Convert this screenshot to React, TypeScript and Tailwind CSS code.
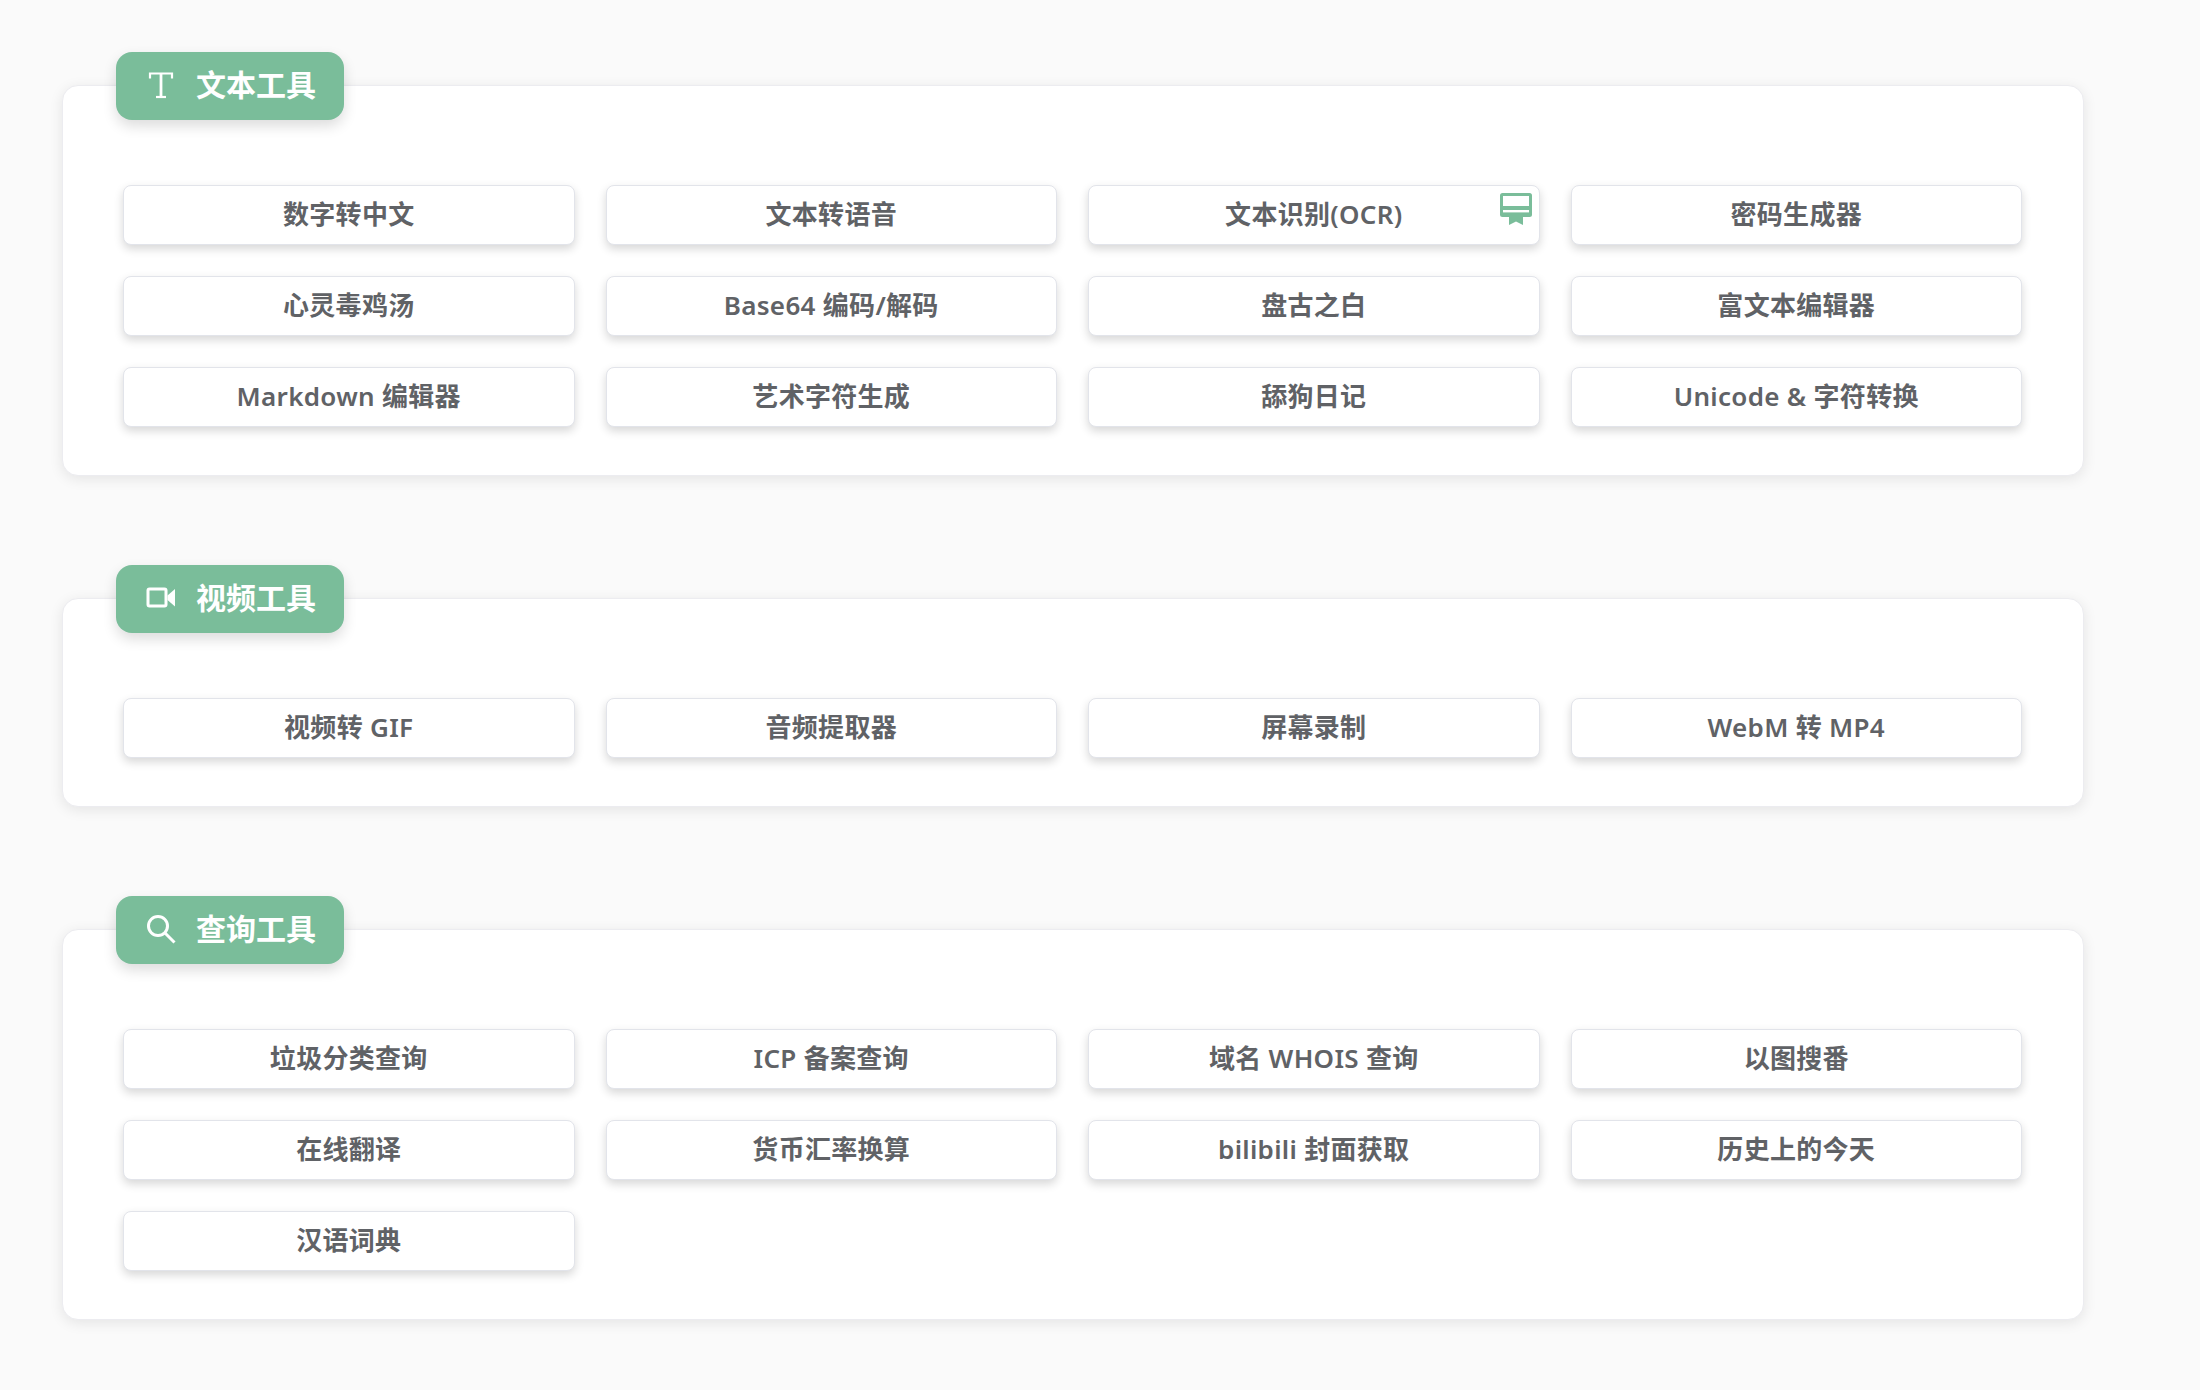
import React from "react";

const FONT = "font-['Noto_Sans','Noto_Sans_CJK_SC',sans-serif]";

function TextIcon() {
  return (
    <svg width="30" height="30" viewBox="0 0 30 30" fill="none" stroke="white" strokeWidth="2.2">
      <path d="M4 8.5V3.5H26V8.5" />
      <path d="M15 3.5V27" strokeWidth="2.8" />
      <path d="M10 27H20" />
    </svg>
  );
}

function VideoIcon() {
  return (
    <svg width="30" height="30" viewBox="0 0 30 30" fill="none">
      <rect x="2" y="6" width="18" height="17" rx="1.5" stroke="white" strokeWidth="3" />
      <path d="M21.5 12.5L29 6V23.5L21.5 17Z" fill="white" />
    </svg>
  );
}

function SearchIcon() {
  return (
    <svg width="30" height="30" viewBox="0 0 30 30" fill="none" stroke="white" strokeWidth="3">
      <circle cx="12" cy="12" r="9.5" />
      <path d="M19 19L28.5 28.5" />
    </svg>
  );
}

function Badge() {
  return (
    <svg className="absolute top-[7px] right-[7px]" width="32" height="32" viewBox="0 0 32 32">
      <rect x="0" y="0" width="32" height="24" rx="2.5" fill="#7abd9a" />
      <rect x="3" y="3" width="26" height="10" fill="white" />
      <rect x="3" y="17" width="26" height="2.4" fill="white" />
      <path d="M9 23H23V32L16 28.5L9 32Z" fill="#7abd9a" />
    </svg>
  );
}

function Tool({ label, badge }: { label: string; badge?: boolean }) {
  return (
    <div className="relative flex h-[60px] items-center justify-center rounded-lg border border-[#e2e4ea] bg-white pb-[2px] text-[26px] font-semibold tracking-[0.3px] text-[#606266] shadow-[0_4px_10px_rgba(0,0,0,0.16)]">
      {label}
      {badge && <Badge />}
    </div>
  );
}

function Section({
  title,
  icon,
  tools,
  badgeIndex,
}: {
  title: string;
  icon: React.ReactNode;
  tools: string[];
  badgeIndex?: number;
}) {
  return (
    <section className="flex w-[2022px] flex-col rounded-2xl border border-[#ececf0] bg-white pb-[48px] pl-[60px] pr-[61px] shadow-[0_3px_14px_rgba(0,0,0,0.09)]">
      <div className="-ml-[7px] -mt-[34px] flex h-[68px] w-[228px] items-center gap-[20px] rounded-2xl bg-[#7abd9a] pb-[3px] pl-[30px] text-[30px] font-semibold text-white shadow-[0_6px_14px_rgba(0,0,0,0.14)]">
        {icon}
        <span>{title}</span>
      </div>
      <div className="mt-[65px] grid grid-cols-4 gap-x-[31px] gap-y-[31px]">
        {tools.map((t, i) => (
          <Tool key={t} label={t} badge={i === badgeIndex} />
        ))}
      </div>
    </section>
  );
}

export default function App() {
  return (
    <div className={`flex min-h-screen flex-col bg-[#fafafa] pl-[62px] pt-[85px] ${FONT}`}>
      <div className="flex flex-col gap-[122px]">
        <Section
          title="文本工具"
          icon={<TextIcon />}
          badgeIndex={2}
          tools={[
            "数字转中文",
            "文本转语音",
            "文本识别(OCR)",
            "密码生成器",
            "心灵毒鸡汤",
            "Base64 编码/解码",
            "盘古之白",
            "富文本编辑器",
            "Markdown 编辑器",
            "艺术字符生成",
            "舔狗日记",
            "Unicode & 字符转换",
          ]}
        />
        <Section
          title="视频工具"
          icon={<VideoIcon />}
          tools={["视频转 GIF", "音频提取器", "屏幕录制", "WebM 转 MP4"]}
        />
        <Section
          title="查询工具"
          icon={<SearchIcon />}
          tools={[
            "垃圾分类查询",
            "ICP 备案查询",
            "域名 WHOIS 查询",
            "以图搜番",
            "在线翻译",
            "货币汇率换算",
            "bilibili 封面获取",
            "历史上的今天",
            "汉语词典",
          ]}
        />
      </div>
    </div>
  );
}
